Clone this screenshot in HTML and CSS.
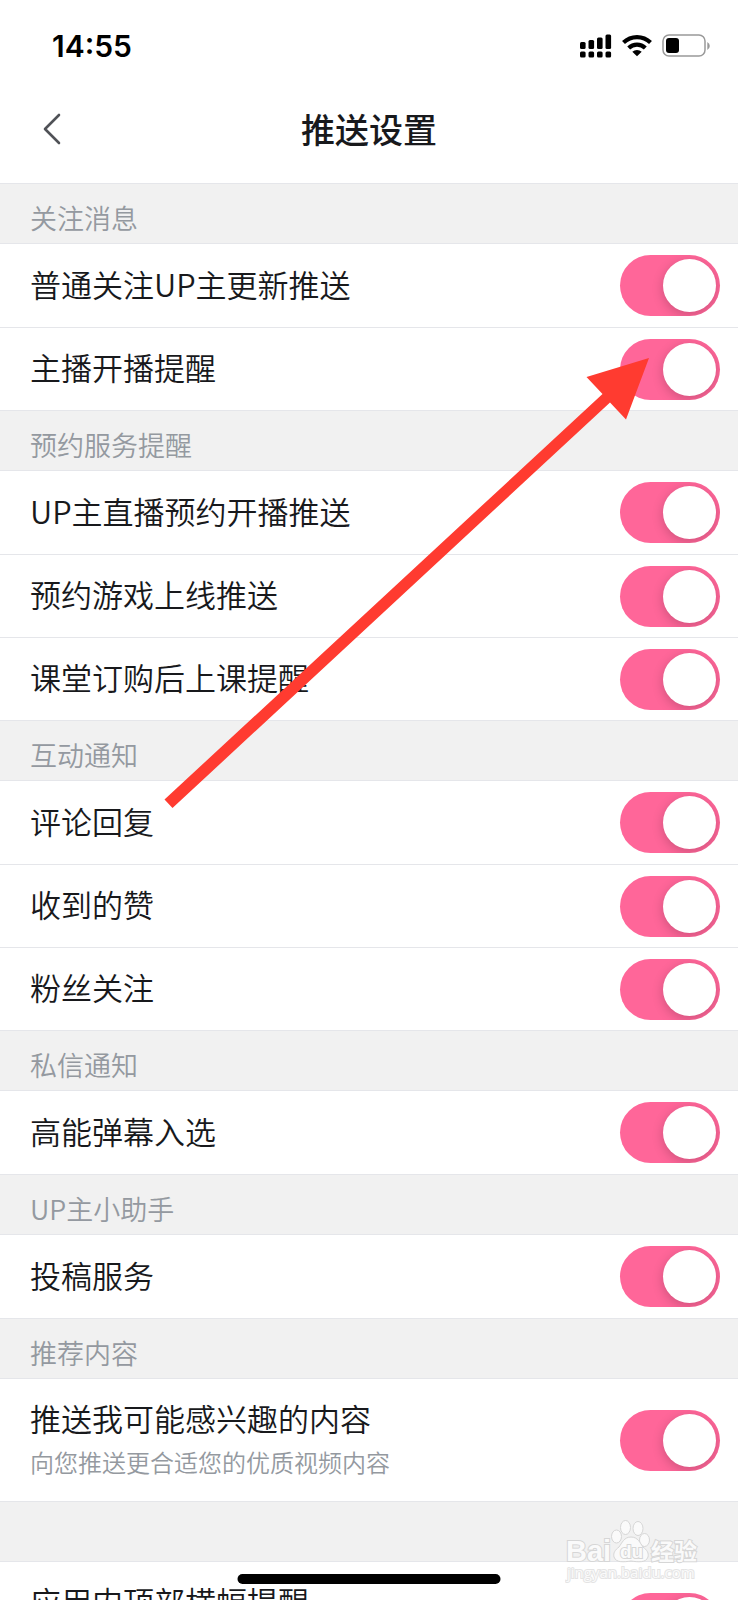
FILE: index.html
```
<!DOCTYPE html>
<html lang="zh-CN">
<head>
  <meta charset="UTF-8" />
  <meta name="viewport" content="width=device-width, initial-scale=1" />
  <title>推送设置</title>
  <link rel="stylesheet" href="styles.css">
</head>
<body>
  <div class="screen">
    <div class="status-bar">
      <span class="time">14:55</span>
      <div class="status-icons">
        <svg width="32" height="24" viewBox="0 0 32 24">
          <rect x="0" y="8" width="5.600" height="7" rx="1.500" />
          <rect x="8.500" y="6" width="5.600" height="9" rx="1.500" />
          <rect x="17" y="3.500" width="5.600" height="11.500" rx="1.500" />
          <rect x="25.500" y="0.500" width="5.600" height="14.500" rx="1.500" />
          <rect x="0" y="17.500" width="5.600" height="6" rx="1.500" />
          <rect x="8.500" y="17.500" width="5.600" height="6" rx="1.500" />
          <rect x="17" y="17.500" width="5.600" height="6" rx="1.500" />
          <rect x="25.500" y="17.500" width="5.600" height="6" rx="1.500" />
        </svg>
        <svg width="30" height="24" viewBox="0 0 30 24">
          <g fill="none" stroke="#000" stroke-width="4.200">
            <path d="M1.500 8.500a19.500 19.500 0 0 1 27 0" />
            <path d="M6.700 14a12 12 0 0 1 16.600 0" />
          </g>
          <path d="M10.300 17.800a7 7 0 0 1 9.400 0L15 22.300z" />
        </svg>
        <svg width="48" height="24" viewBox="0 0 48 24">
          <rect x="1" y="1" width="42" height="21" rx="6" fill="none" stroke="#999" stroke-width="1.500" />
          <rect x="4" y="4" width="13" height="15" rx="3" />
          <path d="M45.300 8v8q2.500-1.500 2.500-4t-2.500-4z" fill="#999" />
        </svg>
      </div>
    </div>

    <header class="nav">
      <button class="back-btn" type="button" aria-label="返回">
        <svg width="18" height="32" viewBox="0 0 18 32">
          <path d="M16 2L2 16l14 14" fill="none" stroke="#505257" stroke-width="2.600" stroke-linecap="round" stroke-linejoin="round" />
        </svg>
      </button>
      <h1>推送设置</h1>
    </header>

    <main>
      <section>
        <h2>关注消息</h2>
        <label class="row"><span>普通关注UP主更新推送</span><input class="switch" type="checkbox" checked></label>
        <label class="row"><span>主播开播提醒</span><input class="switch" type="checkbox" checked></label>
      </section>

      <section>
        <h2>预约服务提醒</h2>
        <label class="row"><span>UP主直播预约开播推送</span><input class="switch" type="checkbox" checked></label>
        <label class="row"><span>预约游戏上线推送</span><input class="switch" type="checkbox" checked></label>
        <label class="row"><span>课堂订购后上课提醒</span><input class="switch" type="checkbox" checked></label>
      </section>

      <section>
        <h2>互动通知</h2>
        <label class="row"><span>评论回复</span><input class="switch" type="checkbox" checked></label>
        <label class="row"><span>收到的赞</span><input class="switch" type="checkbox" checked></label>
        <label class="row"><span>粉丝关注</span><input class="switch" type="checkbox" checked></label>
      </section>

      <section>
        <h2>私信通知</h2>
        <label class="row"><span>高能弹幕入选</span><input class="switch" type="checkbox" checked></label>
      </section>

      <section>
        <h2>UP主小助手</h2>
        <label class="row"><span>投稿服务</span><input class="switch" type="checkbox" checked></label>
      </section>

      <section>
        <h2>推荐内容</h2>
        <label class="row row-tall">
          <span class="info">
            <span>推送我可能感兴趣的内容</span>
            <small>向您推送更合适您的优质视频内容</small>
          </span>
          <input class="switch" type="checkbox" checked>
        </label>
      </section>

      <section>
        <div class="spacer"></div>
        <label class="row row-tall">
          <span class="info"><span>应用内顶部横幅提醒</span></span>
          <input class="switch" type="checkbox" checked>
        </label>
      </section>
    </main>

    <svg class="arrow" width="500" height="460" viewBox="0 0 500 460">
      <path d="M489 8L426.500 27l16 17L4.500 449.500l8 8.500L450 52.500l16 17z" fill="#ff3b30" />
    </svg>

    <svg class="watermark" width="136" height="70" viewBox="0 0 136 70">
      <g class="paw">
        <ellipse cx="51.500" cy="20.500" rx="5" ry="6.500" />
        <ellipse cx="60.500" cy="11.500" rx="5" ry="7" />
        <ellipse cx="73" cy="12.500" rx="5" ry="7" />
        <ellipse cx="79.500" cy="24" rx="5" ry="6.500" />
        <path d="M66 21c7 0 9 6 12 10 4 3 6 6 5 10-2 6-10 5-17 4-7 1-15 2-17-4-1-4 1-7 5-10 3-4 5-10 12-10z" />
      </g>
      <text class="wm-logo" x="1" y="45">Bai</text>
      <text class="wm-du" x="55" y="42">du</text>
      <text class="wm-cn" x="86" y="44">经验</text>
      <text class="wm-url" x="2" y="62">jingyan.baidu.com</text>
    </svg>

    <div class="home-indicator"></div>
  </div>
</body>
</html>
```

FILE: styles.css
```
:root {
  --pink: #ff6699;
  --line: #e5e6ea;
  --gray-bg: #f1f1f1;
}

* {
  box-sizing: border-box;
}

body {
  font-family: "Noto Sans CJK SC", sans-serif;
  background: #fff;
  color: #18191c;
  margin: 0;
}

.screen {
  position: relative;
  height: 100vh;
  overflow: hidden;
}

.status-bar {
  display: flex;
  align-items: center;
  justify-content: space-between;
  height: 91px;
  padding: 0 28px 0 52px;
}

.time {
  font-family: Inter, sans-serif;
  font-size: 30px;
  font-weight: 600;
  color: #000;
}

.status-icons {
  display: flex;
  gap: 10px;
}

.nav {
  display: grid;
  grid-template-columns: 44px 1fr 44px;
  align-items: center;
  height: 92px;
  padding: 0 30px 16px;
}

.back-btn {
  display: flex;
  align-items: center;
  justify-content: center;
  height: 44px;
  padding: 0;
  border: none;
  background: none;
  cursor: pointer;
}

h1 {
  margin: 0;
  font-size: 34px;
  font-weight: 500;
  line-height: 40px;
  text-align: center;
}

h2,
.spacer {
  height: 61px;
  margin: 0;
  background: var(--gray-bg);
  border-top: 1px solid var(--line);
  border-bottom: 1px solid var(--line);
}

h2 {
  padding: 14px 30px 0;
  color: #9499a0;
  font-size: 27px;
  font-weight: 350;
  line-height: 40px;
}

.row {
  display: flex;
  align-items: center;
  justify-content: space-between;
  height: 83px;
  padding: 0 18px 0 30px;
  font-size: 31px;
  font-weight: 350;
  line-height: 44px;
}

.row > span {
  padding-bottom: 4px;
}

.row + .row {
  border-top: 1px solid var(--line);
}

.row-tall {
  height: 122px;
}

.info {
  display: flex;
  flex-direction: column;
  height: 88px;
}

.info small {
  color: #9499a0;
  font-size: 24px;
}

.switch {
  appearance: none;
  flex: none;
  width: 100px;
  height: 61px;
  margin: 0;
  padding: 4px;
  border-radius: 31px;
  background: #ccc;
  overflow: hidden;
  cursor: pointer;
}

.switch::before {
  content: "";
  display: block;
  width: 53px;
  height: 53px;
  border-radius: 50%;
  background: #fff;
  box-shadow: 0 3px 12px rgba(0, 0, 0, 0.2);
}

.switch:checked {
  background: var(--pink);
}

.switch:checked::before {
  margin-left: auto;
}

.arrow {
  position: absolute;
  top: 350px;
  left: 160px;
  pointer-events: none;
}

.watermark {
  position: absolute;
  right: 37px;
  bottom: 14px;
  pointer-events: none;
}

.watermark text,
.paw {
  fill: #fafafa;
  stroke: #d6d6d6;
  stroke-width: 1px;
}

.watermark text {
  font-family: "Liberation Sans", "Noto Sans CJK SC", sans-serif;
  paint-order: stroke;
  stroke-width: 2px;
}

.wm-logo {
  font-size: 29px;
  font-weight: 700;
}

.wm-du {
  font-size: 19px;
  font-weight: 700;
}

.wm-cn {
  font-size: 23px;
  font-weight: 700;
}

.watermark .wm-url {
  font-family: "Open Sans", sans-serif;
  font-size: 15px;
  stroke: #e4e4e4;
}

.home-indicator {
  position: absolute;
  bottom: 16px;
  left: 50%;
  width: 263px;
  height: 10px;
  border-radius: 5px;
  background: #000;
  transform: translateX(-50%);
}
```
